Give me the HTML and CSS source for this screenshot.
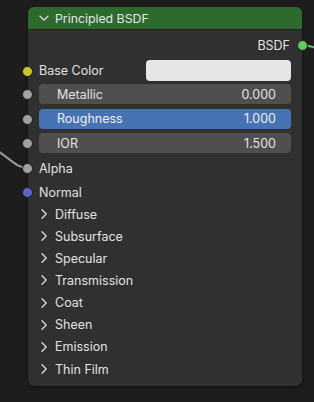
FILE: index.html
```html
<!DOCTYPE html>
<html lang="en">
<head>
    <meta charset="UTF-8">
    <title>Principled BSDF</title>
    <link rel="stylesheet" href="styles.css">
</head>
<body>

<svg class="links" width="314" height="402" viewBox="0 0 314 402">
    <path d="M -4 150 C 10 158, 16 168, 28 168" class="link-gray"/>
    <path d="M 302 45 C 308 45, 310 47, 318 48" class="link-green"/>
</svg>

<div class="node">
    <div class="node-header">
        <svg class="chev" width="10" height="10" viewBox="0 0 10 10"><path d="M1 3.2 L5 7 L9 3.2"/></svg>
        <span>Principled BSDF</span>
    </div>

    <div class="node-body">
        <div class="row output">
            <span>BSDF</span>
            <i class="socket out green"></i>
        </div>

        <div class="row color-row">
            <i class="socket in yellow"></i>
            <span class="label">Base Color</span>
            <div class="swatch"></div>
        </div>

        <div class="fields">
            <div class="row field-row">
                <i class="socket in gray"></i>
                <div class="field"><span>Metallic</span><span>0.000</span></div>
            </div>
            <div class="row field-row">
                <i class="socket in gray"></i>
                <div class="field active"><span>Roughness</span><span>1.000</span></div>
            </div>
            <div class="row field-row">
                <i class="socket in gray"></i>
                <div class="field"><span>IOR</span><span>1.500</span></div>
            </div>
        </div>

        <div class="row plain">
            <i class="socket in gray"></i>
            <span class="label">Alpha</span>
        </div>
        <div class="row plain">
            <i class="socket in purple"></i>
            <span class="label">Normal</span>
        </div>

        <div class="panels">
            <div class="panel"><svg class="chev" width="6" height="10" viewBox="0 0 6 10"><path d="M1 0.8 L5.2 5 L1 9.2"/></svg>Diffuse</div>
            <div class="panel"><svg class="chev" width="6" height="10" viewBox="0 0 6 10"><path d="M1 0.8 L5.2 5 L1 9.2"/></svg>Subsurface</div>
            <div class="panel"><svg class="chev" width="6" height="10" viewBox="0 0 6 10"><path d="M1 0.8 L5.2 5 L1 9.2"/></svg>Specular</div>
            <div class="panel"><svg class="chev" width="6" height="10" viewBox="0 0 6 10"><path d="M1 0.8 L5.2 5 L1 9.2"/></svg>Transmission</div>
            <div class="panel"><svg class="chev" width="6" height="10" viewBox="0 0 6 10"><path d="M1 0.8 L5.2 5 L1 9.2"/></svg>Coat</div>
            <div class="panel"><svg class="chev" width="6" height="10" viewBox="0 0 6 10"><path d="M1 0.8 L5.2 5 L1 9.2"/></svg>Sheen</div>
            <div class="panel"><svg class="chev" width="6" height="10" viewBox="0 0 6 10"><path d="M1 0.8 L5.2 5 L1 9.2"/></svg>Emission</div>
            <div class="panel"><svg class="chev" width="6" height="10" viewBox="0 0 6 10"><path d="M1 0.8 L5.2 5 L1 9.2"/></svg>Thin Film</div>
        </div>
    </div>
</div>

</body>
</html>
```

FILE: styles.css
```css
body {
    margin: 0;
    width: 314px;
    height: 402px;
    overflow: hidden;
    background-color: #1d1d1d;
    font-family: Inter, 'Noto Sans', 'DejaVu Sans', sans-serif;
    font-size: 12.5px;
    color: #e2e2e2;
    position: relative;
}
.links {
    position: absolute;
    left: 0;
    top: 0;
    z-index: 2;
    pointer-events: none;
}
.links path {
    fill: none;
    stroke-width: 2;
}
.link-gray {
    stroke: #9c9c9c;
}
.link-green {
    stroke: #5fc25f;
}
.node {
    position: relative;
    margin: 7px 0 0 28px;
    width: 274px;
    height: 379px;
    background-color: #303030;
    border-radius: 6px;
    box-shadow: 0 1px 3px rgba(0, 0, 0, 0.5);
}
.node-header {
    height: 23px;
    background-color: #2c6a2d;
    border-radius: 6px 6px 0 0;
    border-bottom: 1px solid #242424;
    box-sizing: border-box;
    display: flex;
    align-items: center;
    padding-left: 11px;
    gap: 6px;
    color: #e6e6e6;
    font-size: 12.3px;
}
.chev path {
    fill: none;
    stroke: #dcdcdc;
    stroke-width: 1.3;
    stroke-linecap: round;
    stroke-linejoin: round;
}
.node-body {
    padding-top: 4px;
}
.row {
    position: relative;
    display: flex;
    align-items: center;
}
.socket {
    position: absolute;
    top: 50%;
    width: 9px;
    height: 9px;
    margin-top: -5px;
    border-radius: 50%;
    border: 1px solid #1a1a1a;
    z-index: 3;
}
.socket.in {
    left: -6px;
}
.socket.out {
    right: -6px;
}
.green { background-color: #63c763; }
.yellow { background-color: #c7c729; }
.gray { background-color: #a1a1a1; }
.purple { background-color: #6363c7; }

.output {
    height: 22px;
    justify-content: flex-end;
    padding-right: 12px;
}
.color-row {
    height: 21px;
    margin-top: 4px;
    padding: 0 11px;
}
.label {
    flex: 1;
}
.swatch {
    width: 145px;
    height: 21px;
    background-color: #e6e6e6;
    border-radius: 4px;
}
.fields {
    display: flex;
    flex-direction: column;
    gap: 4.5px;
    margin-top: 3px;
    padding: 0 11px;
}
.field-row {
    height: 20px;
}
.field {
    flex: 1;
    height: 20px;
    box-sizing: border-box;
    display: flex;
    align-items: center;
    justify-content: space-between;
    padding: 0 15px 0 18px;
    background-color: #4f4f4f;
    border-radius: 4px;
}
.field.active {
    background-color: #4772b3;
    color: #f0f0f0;
}
.field-row .socket.in {
    left: -17px;
}
.plain {
    height: 24px;
    padding-left: 11px;
}
.fields + .plain {
    margin-top: 3px;
}
.panels {
    display: flex;
    flex-direction: column;
    margin-top: -1px;
}
.panel {
    height: 22.15px;
    display: flex;
    align-items: center;
    gap: 8px;
    padding-left: 13px;
}
```
